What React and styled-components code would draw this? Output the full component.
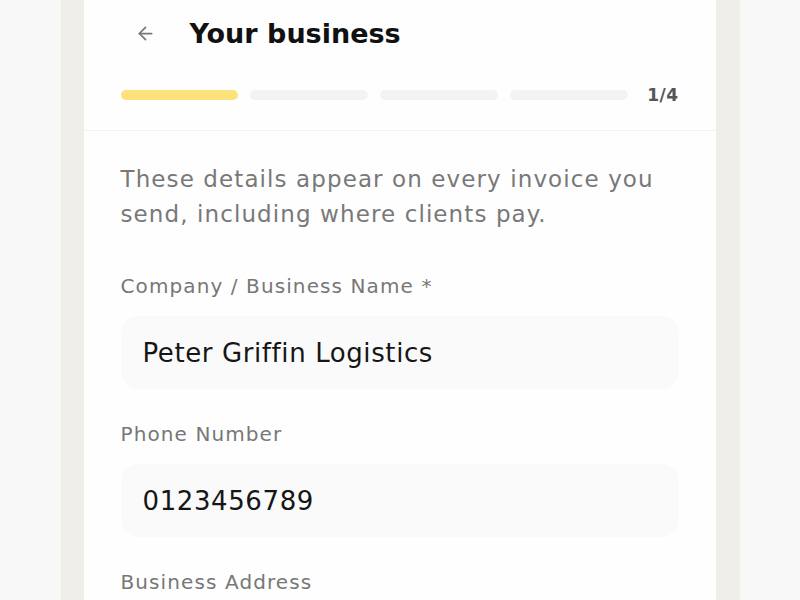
import React from "react";
import styled, { createGlobalStyle } from "styled-components";
import { ArrowLeft } from "lucide-react";

const Global = createGlobalStyle`
  html, body { margin: 0; padding: 0; background: #f8f8f8; }
  * { box-sizing: border-box; }
  body { font-family: "DejaVu Sans", "Noto Sans", sans-serif; }
`;

const Page = styled.div`
  display: flex;
  justify-content: center;
  height: 600px;
  overflow: hidden;
`;

const Frame = styled.div`
  width: 679px;
  padding: 0 24px 0 23px;
  background: linear-gradient(90deg, #efeee9 0%, #f1f0ec 50%, #efeee9 100%);
  display: flex;
  flex-direction: column;
`;

const Card = styled.div`
  background: #fefefe;
  flex: 1;
`;

const Header = styled.header`
  padding: 8px 37px 30px;
  border-bottom: 1px solid #f1f1f1;
`;

const TopRow = styled.div`
  display: flex;
  align-items: center;
  height: 50px;
  gap: 19px;
`;

const BackButton = styled.button`
  width: 50px;
  height: 50px;
  border: none;
  background: transparent;
  padding: 0;
  display: flex;
  align-items: center;
  justify-content: center;
  color: #777;
  cursor: pointer;
`;

const Title = styled.h1`
  margin: 0;
  font-size: 27px;
  font-weight: 700;
  color: #111;
`;

const ProgressRow = styled.div`
  display: flex;
  align-items: center;
  height: 10px;
  margin-top: 32px;
  gap: 12px;
`;

const Segment = styled.div`
  flex: 1;
  height: 10px;
  border-radius: 5px;
  background: ${(p) => (p.$active ? "#fde27c" : "#f3f3f3")};
`;

const StepCount = styled.span`
  margin-left: 7px;
  font-size: 17px;
  font-weight: 700;
  color: #555;
  width: 32px;
  text-align: right;
  letter-spacing: 0.5px;
`;

const Body = styled.div`
  padding: 31px 37px;
`;

const Description = styled.p`
  margin: 0 0 40px;
  font-size: 23px;
  line-height: 35px;
  letter-spacing: 1.1px;
  color: #787878;
`;

const Field = styled.div`
  margin-bottom: 31px;
`;

const Label = styled.label`
  display: block;
  font-size: 20px;
  line-height: 28px;
  letter-spacing: 1.1px;
  color: #777;
  margin-bottom: 16px;
`;

const Input = styled.div`
  height: 73px;
  border-radius: 18px;
  background: #fafafa;
  padding: 0 22px;
  display: flex;
  align-items: center;
  font-size: 26px;
  letter-spacing: 0.6px;
  color: #161616;
`;

export default function App() {
  return (
    <>
      <Global />
      <Page>
        <Frame>
          <Card>
            <Header>
              <TopRow>
                <BackButton aria-label="Back">
                  <ArrowLeft size={21} strokeWidth={2} />
                </BackButton>
                <Title>Your business</Title>
              </TopRow>
              <ProgressRow>
                <Segment $active />
                <Segment />
                <Segment />
                <Segment />
                <StepCount>1/4</StepCount>
              </ProgressRow>
            </Header>
            <Body>
              <Description>
                These details appear on every invoice you send, including where clients pay.
              </Description>
              <Field>
                <Label>Company / Business Name *</Label>
                <Input>Peter Griffin Logistics</Input>
              </Field>
              <Field>
                <Label>Phone Number</Label>
                <Input>0123456789</Input>
              </Field>
              <Field>
                <Label>Business Address</Label>
                <Input>&nbsp;</Input>
              </Field>
            </Body>
          </Card>
        </Frame>
      </Page>
    </>
  );
}
